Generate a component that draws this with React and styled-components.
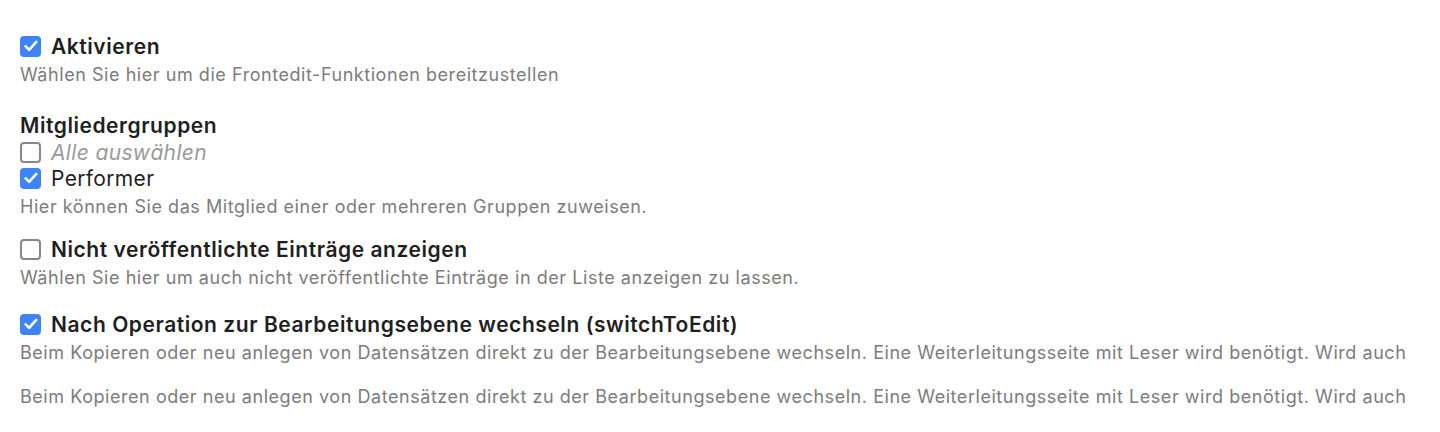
import * as React from 'react'
import styled, { createGlobalStyle } from 'styled-components'

const GlobalStyle = createGlobalStyle`
	html, body {
		margin: 0;
		padding: 0;
		background: #ffffff;
	}
	body {
		font-family: Inter, "Noto Sans", "DejaVu Sans", sans-serif;
		color: #222222;
		-webkit-font-smoothing: antialiased;
	}
`

const Page = styled.main`
	padding: 33px 20px 0;
	display: flex;
	flex-direction: column;
`

const Field = styled.section`
	display: flex;
	flex-direction: column;
	margin-top: ${p => p.$gap || 0}px;
`

const Heading = styled.div`
	font-size: 21px;
	line-height: 27px;
	font-weight: 600;
	letter-spacing: 0.55px;
	color: #1f1f1f;
`

const Row = styled.label`
	display: flex;
	align-items: center;
	gap: 10px;
	height: 26px;
	font-size: 21px;
	letter-spacing: ${p => (p.$bold ? 0.55 : 0.35)}px;
	font-weight: ${p => (p.$bold ? 600 : 400)};
	font-style: ${p => (p.$muted ? 'italic' : 'normal')};
	color: ${p => (p.$muted ? '#9a9a9a' : '#1f1f1f')};
	white-space: nowrap;
`

const Box = styled.span`
	flex: none;
	width: 21px;
	height: 21px;
	box-sizing: border-box;
	border-radius: 4px;
	display: flex;
	align-items: center;
	justify-content: center;
	background: ${p => (p.$checked ? '#3d84f6' : '#ffffff')};
	border: ${p => (p.$checked ? 'none' : '2.5px solid #87868e')};
`

const Help = styled.p`
	margin: ${p => p.$space || 4}px 0 0;
	font-size: 18px;
	line-height: 24px;
	letter-spacing: 0.55px;
	color: #7c7c7c;
	white-space: nowrap;
`

const Check = ({ checked }) => (
	<Box $checked={checked}>
		{checked && (
			<svg width="14" height="12" viewBox="0 0 14 12" fill="none">
				<path d="M1.7 6.3 L5.1 9.8 L12.3 1.9" stroke="#ffffff" strokeWidth="2.6" strokeLinecap="round" strokeLinejoin="round" />
			</svg>
		)}
	</Box>
)

const switchHelp = 'Beim Kopieren oder neu anlegen von Datensätzen direkt zu der Bearbeitungsebene wechseln. Eine Weiterleitungsseite mit Leser wird benötigt. Wird auch'

const App = () => (
	<>
		<GlobalStyle />
		<Page>
			<Field>
				<Row $bold>
					<Check checked />
					Aktivieren
				</Row>
				<Help>Wählen Sie hier um die Frontedit-Funktionen bereitzustellen</Help>
			</Field>

			<Field $gap={25}>
				<Heading>Mitgliedergruppen</Heading>
				<Row $muted>
					<Check />
					Alle auswählen
				</Row>
				<Row>
					<Check checked />
					Performer
				</Row>
				<Help>Hier können Sie das Mitglied einer oder mehreren Gruppen zuweisen.</Help>
			</Field>

			<Field $gap={17}>
				<Row $bold>
					<Check />
					Nicht veröffentlichte Einträge anzeigen
				</Row>
				<Help>Wählen Sie hier um auch nicht veröffentlichte Einträge in der Liste anzeigen zu lassen.</Help>
			</Field>

			<Field $gap={21}>
				<Row $bold>
					<Check checked />
					Nach Operation zur Bearbeitungsebene wechseln (switchToEdit)
				</Row>
				<Help>{switchHelp}</Help>
				<Help $space={20}>{switchHelp}</Help>
			</Field>
		</Page>
	</>
)

export default App
